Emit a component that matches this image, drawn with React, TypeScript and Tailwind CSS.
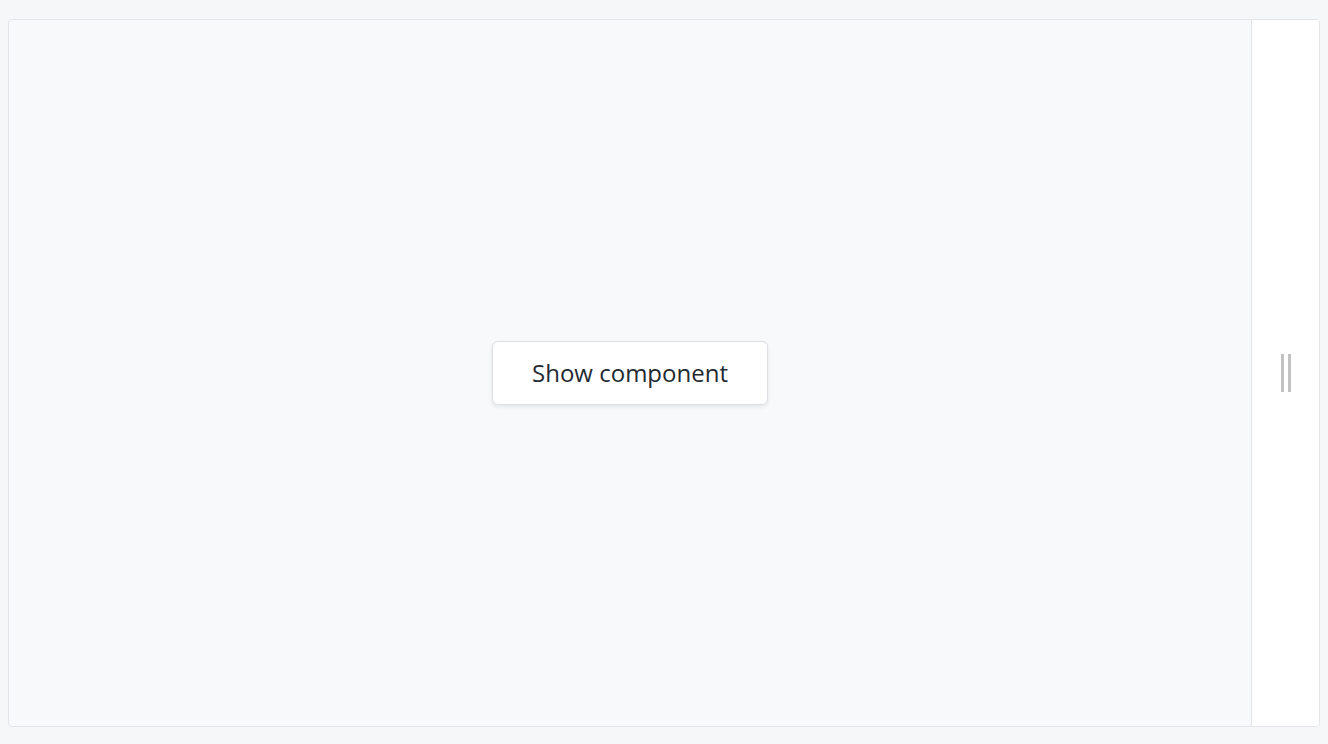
import React from 'react'

const App = () => {
    return (
        <div className="h-[744px] w-full bg-[#f6f7f9] px-2 pt-[19px] pb-[17px]">
            <div className="flex h-full w-full overflow-hidden rounded border border-[#e3e5e8] bg-[#f8f9fb]">
                <div className="flex flex-1 items-center justify-center">
                    <button className="h-[64px] w-[276px] rounded-md border border-[#dcdfe3] bg-white text-[24px] text-[#242a33] shadow-[0_2px_4px_rgba(0,0,0,0.08)] font-['Open_Sans',sans-serif]">
                        Show component
                    </button>
                </div>
                <div className="flex w-[68px] items-center justify-center gap-[4px] border-l border-[#e3e5e8] bg-white">
                    <div className="h-[38px] w-[3px] bg-[#c2c2c2]" />
                    <div className="h-[38px] w-[3px] bg-[#c2c2c2]" />
                </div>
            </div>
        </div>
    )
}

export default App
